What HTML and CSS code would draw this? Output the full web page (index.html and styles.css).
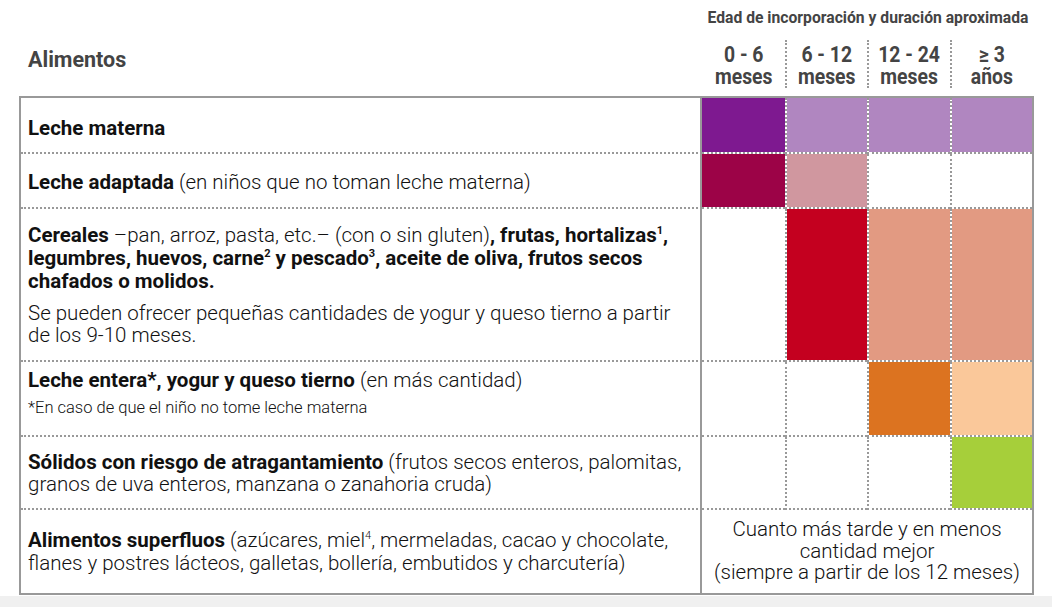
FILE: index.html
```html
<!DOCTYPE html>
<html lang="es">
<head>
<meta charset="utf-8">
<title>Alimentos</title>
<link rel="stylesheet" href="styles.css">
</head>
<body>
<div class="page">
  <div class="head">
    <div class="head-food">Alimentos</div>
    <div class="head-ages">
      <div class="head-title">Edad de incorporación y duración aproximada</div>
      <div class="head-cols">
        <div class="hc"><span>0 - 6<br>meses</span></div>
        <div class="hc sep"><span>6 - 12<br>meses</span></div>
        <div class="hc sep"><span>12 - 24<br>meses</span></div>
        <div class="hc sep"><span>≥ 3<br>años</span></div>
      </div>
    </div>
  </div>

  <div class="grid">
    <div class="food r1"><p><b>Leche materna</b></p></div>
    <div class="c c-purple"></div>
    <div class="c sep c-lilac"></div>
    <div class="c sep c-lilac"></div>
    <div class="c sep c-lilac"></div>

    <div class="food r2"><p><b>Leche adaptada</b> (en niños que no toman leche materna)</p></div>
    <div class="c c-wine"></div>
    <div class="c sep c-rose"></div>
    <div class="c sep"></div>
    <div class="c sep"></div>

    <div class="food">
      <p><b>Cereales</b> –pan, arroz, pasta, etc.– (con o sin gluten)<b>, frutas, hortalizas<sup>1</sup>,<br>legumbres, huevos, carne<sup>2</sup> y pescado<sup>3</sup>, aceite de oliva, frutos secos<br>chafados o molidos.</b></p>
      <p class="para">Se pueden ofrecer pequeñas cantidades de yogur y queso tierno a partir<br>de los 9-10 meses.</p>
    </div>
    <div class="c"></div>
    <div class="c sep c-red"></div>
    <div class="c sep c-salmon"></div>
    <div class="c sep c-salmon"></div>

    <div class="food r4">
      <p><b>Leche entera*, yogur y queso tierno</b> (en más cantidad)</p>
      <p class="note">*En caso de que el niño no tome leche materna</p>
    </div>
    <div class="c"></div>
    <div class="c sep"></div>
    <div class="c sep c-orange"></div>
    <div class="c sep c-peach"></div>

    <div class="food r5"><p><b>Sólidos con riesgo de atragantamiento</b> (frutos secos enteros, palomitas,<br>granos de uva enteros, manzana o zanahoria cruda)</p></div>
    <div class="c"></div>
    <div class="c sep"></div>
    <div class="c sep"></div>
    <div class="c sep c-green"></div>

    <div class="food last"><p><b>Alimentos superfluos</b> (azúcares, miel<sup>4</sup>, mermeladas, cacao y chocolate,<br>flanes y postres lácteos, galletas, bollería, embutidos y charcutería)</p></div>
    <div class="span-note">Cuanto más tarde y en menos<br>cantidad mejor<br>(siempre a partir de los 12 meses)</div>
  </div>
  <div class="foot"></div>
</div>
</body>
</html>
```

FILE: styles.css
```css
* { box-sizing: border-box; }
html, body { margin: 0; padding: 0; background: #fff; }
body {
  font-family: Roboto, "Noto Sans", "DejaVu Sans", sans-serif;
  color: #111;
}
.page { width: 1052px; }

.head {
  display: flex;
  height: 96px;
  padding-left: 19px;
}
.head-food {
  width: 683px;
  padding: 48px 0 0 9px;
  font-size: 21.5px;
  font-weight: 700;
  color: #444;
  line-height: 24px;
}
.head-ages {
  width: 332px;
  display: flex;
  flex-direction: column;
}
.head-title {
  margin-top: 9px;
  height: 18px;
  line-height: 18px;
  font-size: 15.7px;
  font-weight: 700;
  color: #444;
  text-align: center;
  white-space: nowrap;
}
.head-cols {
  margin-top: 13px;
  display: grid;
  grid-template-columns: repeat(4, 1fr);
  width: 330px;
}
.hc {
  height: 48px;
  padding-top: 4px;
  text-align: center;
  font-size: 22px;
  font-weight: 700;
  line-height: 22px;
  color: #444;
  white-space: nowrap;
}
.hc span {
  display: inline-block;
  transform: scaleX(0.88);
}
.hc.sep { border-left: 2px dotted #999; }

.grid {
  margin-left: 19px;
  width: 1015px;
  border: 2px solid #999;
  display: grid;
  grid-template-columns: 681px repeat(4, 1fr);
  grid-template-rows: 56px 55px 153px 75px 73px 83px;
  background: #fff;
}
.food {
  border-right: 2px solid #999;
  border-bottom: 2px dotted #999;
  padding: 0 4px 0 7px;
  display: flex;
  flex-direction: column;
  justify-content: center;
  font-size: 20.5px;
  line-height: 23px;
  font-weight: 300;
  white-space: nowrap;
}
.food.r1 { padding-top: 6px; }
.food.r2 { padding-top: 3px; }
.food.r4 { padding-bottom: 10px; }
.food.r5 { line-height: 22px; }
.food.last { border-bottom: 0; }
.food p { margin: 0; }
.food b { font-weight: 700; }
.food .para { margin-top: 9px; line-height: 22px; }
.food .note { margin-top: 6px; font-size: 16.5px; line-height: 20px; }
sup { font-size: 11px; line-height: 0; vertical-align: 8px; }

.c {
  border-bottom: 2px dotted #999;
  background-clip: padding-box;
}
.c.sep { border-left: 2px dotted #999; }
.c-purple { background-color: #7e1990; }
.c-lilac { background-color: #b086c0; }
.c-wine { background-color: #9c0347; }
.c-rose { background-color: #d0979f; }
.c-red { background-color: #c4001f; }
.c-salmon { background-color: #e29a82; }
.c-orange { background-color: #dc7320; }
.c-peach { background-color: #fac89a; }
.c-green { background-color: #a6cf3a; }

.span-note {
  grid-column: 2 / 6;
  display: flex;
  align-items: center;
  justify-content: center;
  text-align: center;
  font-size: 20.5px;
  font-weight: 300;
  line-height: 21.5px;
  white-space: nowrap;
}
.foot {
  height: 14px;
  margin-top: 1px;
  background: #f0f0f0;
}
```
